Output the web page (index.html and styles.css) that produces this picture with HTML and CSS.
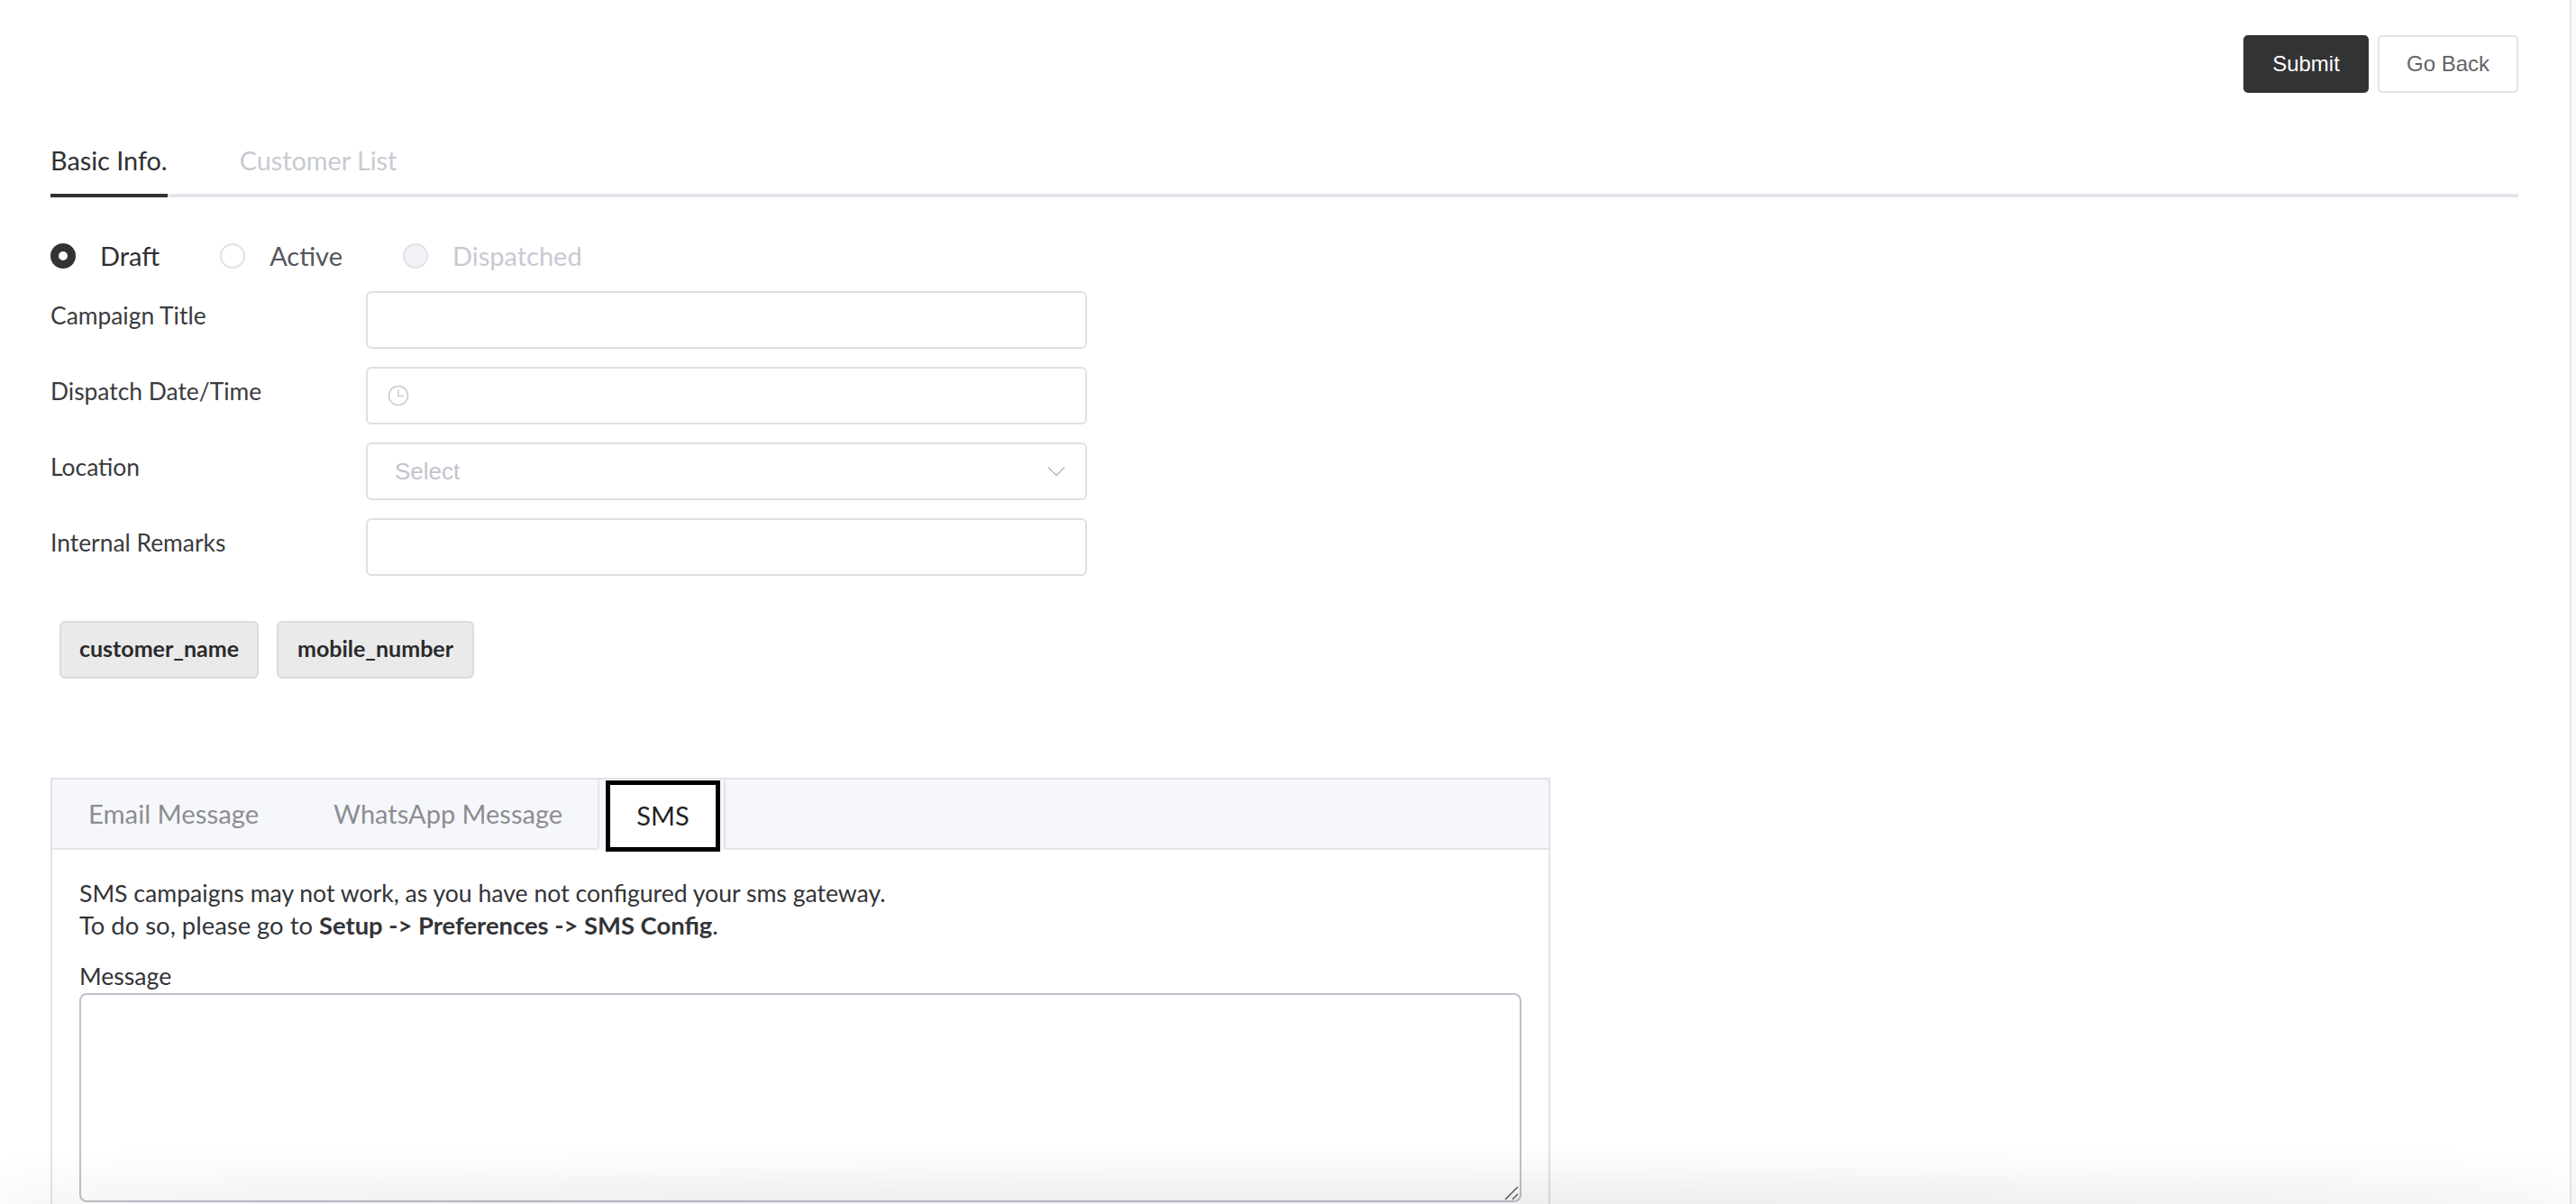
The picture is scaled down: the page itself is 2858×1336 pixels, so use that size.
FILE: index.html
```html
<!DOCTYPE html>
<html lang="en">
<head>
<meta charset="utf-8">
<title>Campaign</title>
<link rel="stylesheet" href="styles.css">
</head>
<body>
<div class="page">
  <main class="main">
    <div class="actions">
      <button class="btn btn-primary" type="button">Submit</button>
      <button class="btn btn-default" type="button">Go Back</button>
    </div>
    <nav class="tabs">
      <span class="tab tab-active">Basic Info.</span>
      <span class="tab">Customer List</span>
    </nav>
    <div class="radios">
      <label class="radio radio-on"><span class="dot"></span>Draft</label>
      <label class="radio radio-off"><span class="dot"></span>Active</label>
      <label class="radio radio-disabled"><span class="dot"></span>Dispatched</label>
    </div>
    <div class="form">
      <div class="row">
        <label class="label">Campaign Title</label>
        <input class="input" type="text">
      </div>
      <div class="row">
        <label class="label">Dispatch Date/Time</label>
        <div class="input with-icon">
          <svg class="clock" viewBox="0 0 24 24" width="24" height="24" fill="none" stroke="#c9cad2" stroke-width="1.5"><circle cx="12" cy="12" r="10.5"/><path d="M12 5.5V12.5H18"/></svg>
        </div>
      </div>
      <div class="row">
        <label class="label">Location</label>
        <div class="input select">
          <span class="placeholder">Select</span>
          <svg class="chev" viewBox="0 0 20 12" width="20" height="12" fill="none" stroke="#b5b6bf" stroke-width="1.4"><path d="M1 1.5L10 10.5L19 1.5"/></svg>
        </div>
      </div>
      <div class="row">
        <label class="label">Internal Remarks</label>
        <input class="input" type="text">
      </div>
    </div>
    <div class="chips">
      <button class="chip" type="button">customer_name</button>
      <button class="chip" type="button">mobile_number</button>
    </div>
    <section class="card">
      <div class="card-tabs">
        <span class="card-tab">Email Message</span>
        <span class="card-tab">WhatsApp Message</span>
        <span class="card-tab card-tab-active">SMS</span>
        <span class="card-tabs-rest"></span>
      </div>
      <div class="card-body">
        <p class="note">SMS campaigns may not work, as you have not configured your sms gateway.<br><span class="note-line">To do so, please go to <strong>Setup -&gt; Preferences -&gt; SMS Config</strong>.</span></p>
        <label class="msg-label">Message</label>
        <div class="msg-wrap">
          <textarea class="msg"></textarea>
          <svg class="grip" viewBox="0 0 16 16" width="16" height="16" fill="none" stroke="#666" stroke-width="1.6"><path d="M1 15L15 1M9 15L15 9"/></svg>
        </div>
      </div>
    </section>
  </main>
  <aside class="scrolltrack"></aside>
</div>
<div class="bottom-fade"></div>
</body>
</html>
```
FILE: styles.css
```css
* { box-sizing: border-box; }
html, body { margin: 0; height: 1336px; overflow: hidden; background: #fff; }
body { font-family: Lato, "Open Sans", sans-serif; color: #2f3033; font-size: 26.6px; position: relative; }
.page { display: flex; height: 1336px; }
.main { flex: 1; min-width: 0; padding: 39px 57px 0 56px; overflow: hidden; }
.scrolltrack { width: 7px; flex: none; background: #fafafa; border-left: 2px solid #e6e6e6; }

.actions { display: flex; justify-content: flex-end; gap: 10px; height: 64px; }
.btn { height: 64px; font-family: "Liberation Sans", Arial, sans-serif; font-size: 24px; border-radius: 5px; cursor: pointer; padding: 0; }
.btn-primary { width: 139px; background: #323334; border: 2px solid #323334; color: #fff; }
.btn-default { width: 156px; background: #fff; border: 2px solid #e3e3e9; color: #636469; }

.tabs { display: flex; gap: 80px; margin-top: 38px; height: 78px; border-bottom: 4px solid #e4e5ea; padding-top: 17px; }
.tab { height: 61px; line-height: 40px; font-size: 28.8px; color: #c8cad2; }
.tab-active { color: #2f3033; border-bottom: 4px solid #323334; height: 61px; }

.radios { display: flex; align-items: center; margin-top: 51px; height: 28px; font-size: 29px; }
.radio { display: flex; align-items: center; gap: 27px; margin-right: 67px; line-height: 24px; }
.dot { width: 28px; height: 28px; border-radius: 50%; display: block; border: 2px solid #e1e2e8; background: #fff; }
.radio-on .dot { border: 9px solid #323334; }
.radio-off { color: #55565b; }
.radio-disabled { color: #c8cad2; }
.radio-disabled .dot { background: #f2f3f8; }

.form { display: flex; flex-direction: column; gap: 20px; margin-top: 25px; }
.row { display: flex; height: 64px; }
.label { width: 350px; flex: none; line-height: 30px; padding-top: 12px; color: #3a3b3e; font-size: 26.4px; }
.input { width: 800px; height: 64px; border: 2px solid #dfe0e6; border-radius: 6px; background: #fff; display: flex; align-items: center; outline: none; }
.with-icon { padding-left: 22px; }
.select { padding: 0 22px 0 30px; justify-content: space-between; }
.placeholder { font-family: "Liberation Sans", Arial, sans-serif; font-size: 26px; color: #c3c4cc; }

.chips { display: flex; gap: 20px; margin: 50px 0 0 10px; }
.chip { height: 64px; width: 221px; background: #eaeaea; border: 2px solid #dbdbdf; border-radius: 6px; font-family: Lato, sans-serif; font-weight: 700; font-size: 25px; line-height: 52px; color: #2a2a2c; padding: 0 0 4px; }
.chip + .chip { width: 219px; }

.card { width: 1664px; margin-top: 110px; border: 2px solid #e1e2e8; border-bottom: 0; height: 480px; }
.card-tabs { display: flex; height: 78px; background: #f6f7fb; }
.card-tab { display: flex; align-items: center; font-size: 29.3px; color: #8c8d92; border-bottom: 2px solid #e4e5ea; padding-bottom: 2px; }
.card-tab:nth-child(1) { width: 312px; padding-left: 40px; }
.card-tab:nth-child(2) { width: 295px; font-size: 29px; border-right: 2px solid #e4e5ea; border-bottom-right-radius: 4px; }
.card-tab-active { width: 127px; height: 79px; margin: 1px 4px 0 7px; padding: 0 0 2px; justify-content: center; color: #222; background: #fff; border: 5px solid #000; position: relative; font-size: 29px; }
.card-tabs-rest { flex: 1; border-left: 2px solid #e4e5ea; border-bottom: 2px solid #e4e5ea; border-bottom-left-radius: 4px; }

.card-body { padding: 30px 30px 0; background: #fff; }
.note { margin: 0; line-height: 36px; color: #333437; }
.note-line { font-size: 27.4px; }
.note strong { font-weight: 700; }
.msg-label { display: block; margin-top: 23px; line-height: 30px; color: #333437; }
.msg-wrap { position: relative; width: 1600px; height: 232px; margin-top: 4px; }
.msg { display: block; width: 100%; height: 100%; border: 2px solid #bfc1cb; border-radius: 8px; background: #fff; resize: none; outline: none; }
.grip { position: absolute; right: 3px; bottom: 2px; }

.bottom-fade { position: absolute; left: 0; right: 0; top: 1336px; height: 10px; box-shadow: 0 0 60px 14px rgba(0,0,0,.14); border-radius: 50%; pointer-events: none; }
```
